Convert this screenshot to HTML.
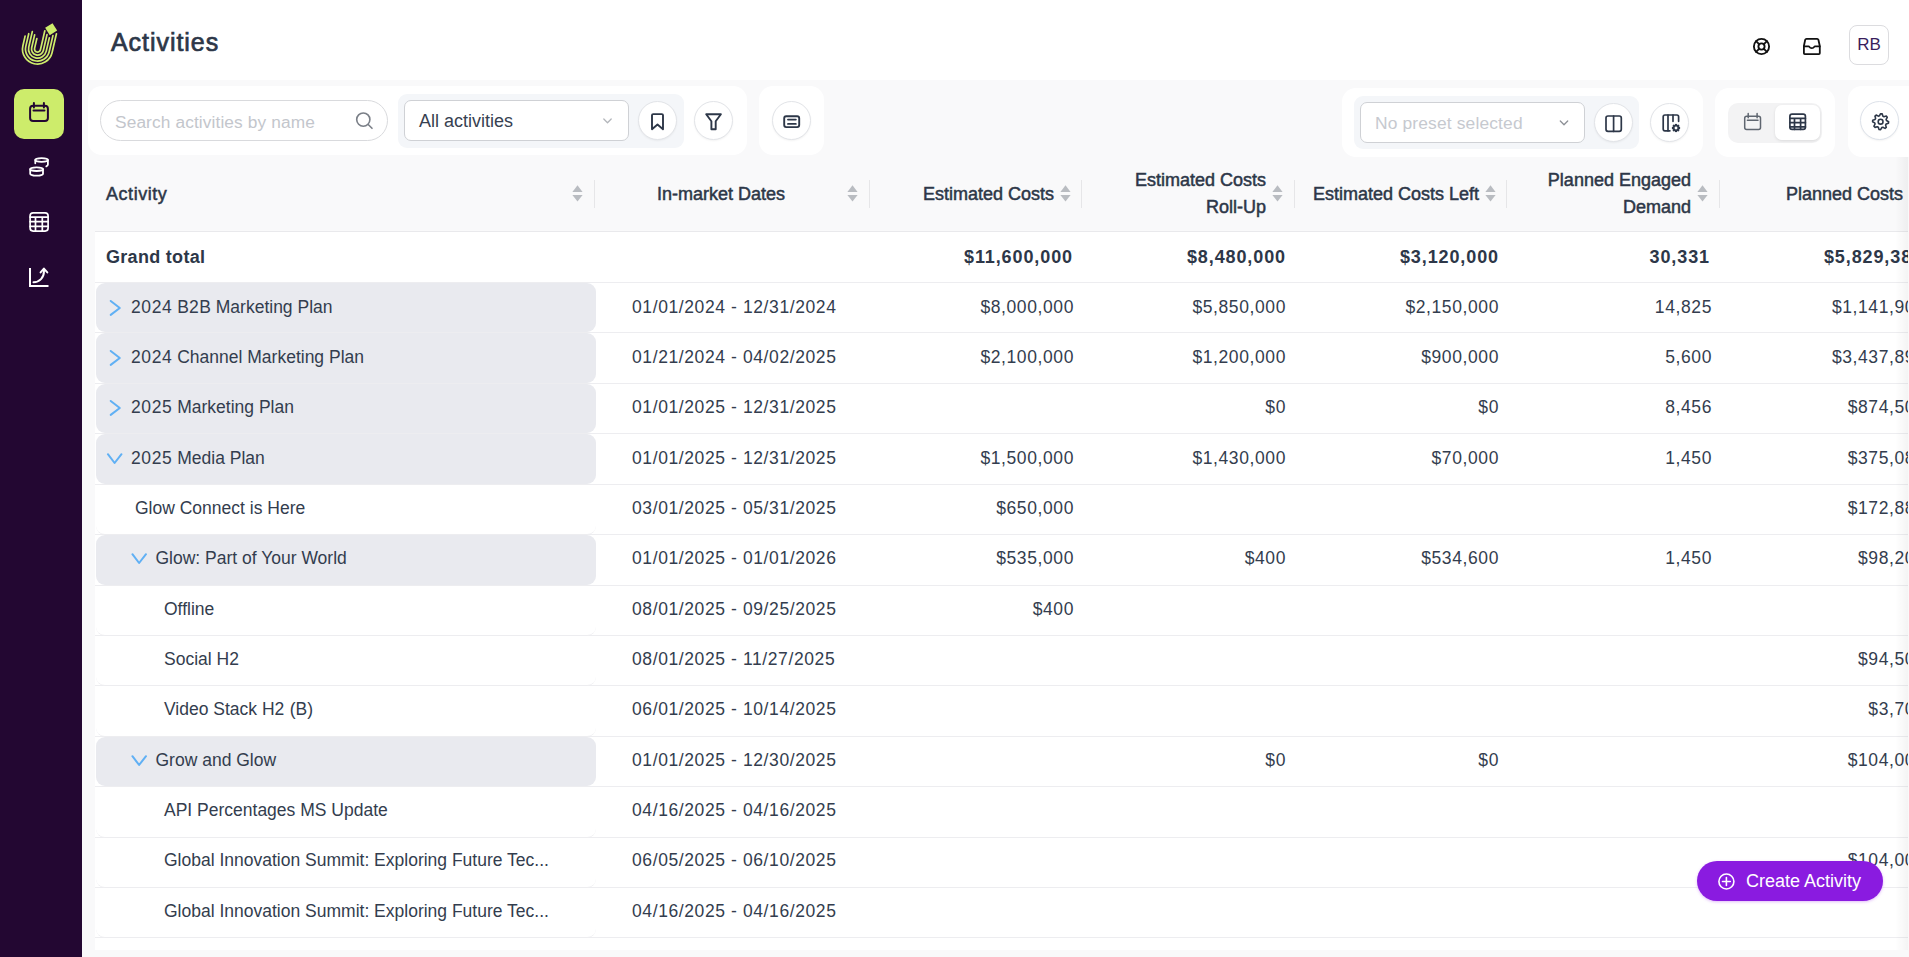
<!DOCTYPE html>
<html><head><meta charset="utf-8"><style>
*{box-sizing:border-box;margin:0;padding:0}
html,body{width:1909px;height:957px;overflow:hidden}
body{font-family:"Liberation Sans",sans-serif;background:#f9f9fa;color:#2d3748;position:relative}
.abs{position:absolute}
svg{display:block;overflow:visible}
#side{left:0;top:0;width:82px;height:957px;background:#230732}
#hdr{left:82px;top:0;width:1827px;height:80px;background:#fff}
.card{position:absolute;background:#fff;border-radius:14px}
.grp{position:absolute;background:#f4f6f9;border-radius:9px}
.cbtn{position:absolute;width:39px;height:39px;border-radius:50%;background:#fff;border:1px solid #e2e4e8;box-shadow:0 1px 2px rgba(0,0,0,.05)}
.sel{position:absolute;background:#fff;border:1px solid #cfd1d5;border-radius:7px}
#tbl{left:95px;top:157px;width:1813px;height:793px;background:#fff;overflow:hidden}
#thead{position:absolute;left:0;top:0;width:1813px;height:75px;background:#f9f9fa;border-bottom:1px solid #e9e9ec}
.th{position:absolute;font-weight:400;font-size:18px;line-height:27px;-webkit-text-stroke:0.5px #2d3748;white-space:nowrap;color:#2d3748}
.dv{position:absolute;top:23px;width:1px;height:28px;background:#e6e6e8}
.row{position:absolute;left:0;width:1813px;border-bottom:1px solid #ededf0}
.pill{position:absolute;left:1px;top:0;width:500px;bottom:0;background:#e9eaef;border-radius:9px}
.cell{position:absolute;top:0;height:100%;display:flex;align-items:center;font-size:17.5px;white-space:nowrap;color:#2d3748}
.r{justify-content:flex-end}
.lpill{position:absolute;left:1px;top:0;width:500px;bottom:-1px;background:#fff;border-bottom:1px solid #ededf0;border-radius:9px}
.tx{position:absolute;font-size:17.5px;line-height:20px;white-space:nowrap;color:#333d4e}
.num{letter-spacing:0.6px}
.dg{letter-spacing:0.6px}
.gt{font-weight:700;font-size:18px;letter-spacing:0.9px}
</style></head><body>
<div id="side" class="abs"></div>
<svg class="abs" style="left:0px;top:0px" width="82" height="80" viewBox="0 0 82 80" fill="none" stroke="#cdec6b" stroke-width="1.7" stroke-linecap="round" stroke-linejoin="round" ><g transform="translate(37.5 49.1) rotate(13)"><path d="M-3 -10.1 V0 A3 3 0 0 0 3 0 V-19.5"/><path d="M-6 -13.2 V0 A6 6 0 0 0 6 0 V-16.3"/><path d="M-9 -15.9 V0 A9 9 0 0 0 9 0 V-13.6"/><path d="M-12 -13.0 V0 A12 12 0 0 0 12 0 V-16.6"/><path d="M-15 -9.8 V0 A15 15 0 0 0 15 0 V-19.2"/><rect x="-4.35" y="-4.35" width="8.7" height="8.7" fill="#cdec6b" stroke="none" transform="translate(8.8 -22.5) rotate(-45)"/></g></svg>
<div class="abs" style="left:14px;top:89px;width:50px;height:50px;border-radius:10px;background:#cdec6b"></div>
<svg class="abs" style="left:0px;top:90px" width="82" height="50" viewBox="0 90 82 50" fill="none" stroke="#230732" stroke-width="2" stroke-linecap="round" stroke-linejoin="round" ><rect x="30.1" y="105.7" width="17.8" height="15.2" rx="3"/><path d="M33.9 103v4.6M43.9 103v4.6M33.5 110.6h11"/></svg>
<svg class="abs" style="left:0px;top:150px" width="82" height="35" viewBox="0 150 82 35" fill="none" stroke="#fff" stroke-width="1.8" stroke-linecap="round" stroke-linejoin="round" ><ellipse cx="41.6" cy="160" rx="6.3" ry="1.8"/><path d="M35.3 160v3.3M47.9 160v4.6c0 .8-.6 1.4-1.6 1.8"/><ellipse cx="36.6" cy="169.2" rx="6.4" ry="1.8"/><path d="M30.2 169.2v4.6c0 1 2.9 1.9 6.4 1.9s6.4-.9 6.4-1.9v-4.6"/></svg>
<svg class="abs" style="left:0px;top:205px" width="82" height="35" viewBox="0 205 82 35" fill="none" stroke="#fff" stroke-width="1.7" stroke-linecap="round" stroke-linejoin="round" ><rect x="30.1" y="212.8" width="18" height="18.3" rx="3"/><path d="M30.1 217.1h18M30.1 221.7h18M30.1 226.4h18M35.5 217.1v14M42.3 217.1v14"/></svg>
<svg class="abs" style="left:0px;top:260px" width="82" height="35" viewBox="0 260 82 35" fill="none" stroke="#fff" stroke-width="2" stroke-linecap="round" stroke-linejoin="round" ><path d="M30 268v18h18.5" stroke-linecap="butt" stroke-linejoin="miter"/><path d="M33.5 282.2c6 0 10.5-4.5 10.5-11.2"/><path d="M40.6 272.4l3.3-3.8 3.4 3.8"/></svg>
<div id="hdr" class="abs"></div>
<div class="abs" style="left:111px;top:26px;font-size:25px;font-weight:400;line-height:32px;color:#2d3748;-webkit-text-stroke:0.7px #2d3748;letter-spacing:0.95px">Activities</div>
<svg class="abs" style="left:1745px;top:30px" width="35" height="35" viewBox="1745 30 35 35" fill="none" stroke="#111" stroke-width="1.85" stroke-linecap="round" stroke-linejoin="round" ><circle cx="1761.5" cy="46.5" r="7.6"/><circle cx="1761.5" cy="46.5" r="3.1"/><path d="M1763.7 44.3l3.2-3.2M1759.3 48.7l-3.2 3.2M1759.3 44.3l-3.2-3.2M1763.7 48.7l3.2 3.2"/></svg>
<svg class="abs" style="left:1795px;top:30px" width="35" height="35" viewBox="1795 30 35 35" fill="none" stroke="#111" stroke-width="1.8" stroke-linecap="round" stroke-linejoin="round" ><path d="M1803.9 46v7.2c0 .6.3.9.9.9h14.1c.6 0 .9-.3.9-.9V46l-1.4-6.2c-.2-.7-.6-1-1.3-1h-10.6c-.7 0-1.1.3-1.3 1z"/><path d="M1803.9 46.4h4.7c.4 0 .6.2.8.5.5.9 1.2 1.3 2.4 1.3s1.9-.4 2.4-1.3c.2-.3.4-.5.8-.5h4.7"/></svg>
<div class="abs" style="left:1849px;top:25px;width:40px;height:40px;border:1px solid #dcdcdf;border-radius:8px;background:#fff;font-size:17px;line-height:38px;text-align:center;color:#3a1e5c">RB</div>
<div class="card" style="left:88px;top:86px;width:659px;height:69px"></div>
<div class="abs" style="left:100px;top:100px;width:288px;height:41px;border:1px solid #d9dadd;border-radius:21px;background:#fff"></div>
<div class="abs" style="left:115px;top:110.5px;font-size:17.3px;line-height:22px;letter-spacing:0.12px;color:#c3c6cc">Search activities by name</div>
<svg class="abs" style="left:350px;top:105px" width="30" height="30" viewBox="350 105 30 30" fill="none" stroke="#7a7f87" stroke-width="1.6" stroke-linecap="round" stroke-linejoin="round" ><circle cx="363.3" cy="119.6" r="6.6"/><path d="M368.2 124.5l3.8 3.8"/></svg>
<div class="grp" style="left:398px;top:94px;width:286px;height:54px"></div>
<div class="sel" style="left:404px;top:100px;width:225px;height:41px"></div>
<div class="abs" style="left:419px;top:110px;font-size:18px;line-height:22px;color:#374151">All activities</div>
<svg class="abs" style="left:595px;top:110px" width="25" height="20" viewBox="595 110 25 20" fill="none" stroke="#b3b6bb" stroke-width="1.3" stroke-linecap="round" stroke-linejoin="round" ><path d="M603.8 119l3.7 3.7 3.7-3.7"/></svg>
<div class="cbtn" style="left:638px;top:101px"></div>
<svg class="abs" style="left:640px;top:105px" width="35" height="30" viewBox="640 105 35 30" fill="none" stroke="#2d3748" stroke-width="1.9" stroke-linecap="round" stroke-linejoin="round" ><path d="M652 129.2V115.3c0-.8.5-1.2 1.2-1.2h8.6c.7 0 1.2.4 1.2 1.2v13.9l-5.5-4.6z"/></svg>
<div class="cbtn" style="left:694px;top:101px"></div>
<svg class="abs" style="left:695px;top:105px" width="35" height="30" viewBox="695 105 35 30" fill="none" stroke="#2d3748" stroke-width="1.9" stroke-linecap="round" stroke-linejoin="round" ><path d="M706.2 114.2h14.7l-5.2 7v8.1h-4.3v-8.1z"/></svg>
<div class="card" style="left:759px;top:86px;width:65px;height:69px"></div>
<div class="cbtn" style="left:772px;top:101px"></div>
<svg class="abs" style="left:775px;top:105px" width="35" height="30" viewBox="775 105 35 30" fill="none" stroke="#2d3748" stroke-width="1.9" stroke-linecap="round" stroke-linejoin="round" ><rect x="784.2" y="116.3" width="15" height="10.8" rx="2"/><path d="M788 119.6h7.8M788 123.9h7.8"/></svg>
<div class="card" style="left:1342px;top:88px;width:361px;height:69px"></div>
<div class="grp" style="left:1354px;top:96px;width:285px;height:53px"></div>
<div class="sel" style="left:1360px;top:102px;width:225px;height:41px"></div>
<div class="abs" style="left:1375px;top:112px;font-size:17.4px;line-height:22px;letter-spacing:0.15px;color:#c6c9cf">No preset selected</div>
<svg class="abs" style="left:1550px;top:110px" width="25" height="20" viewBox="1550 110 25 20" fill="none" stroke="#8d9096" stroke-width="1.3" stroke-linecap="round" stroke-linejoin="round" ><path d="M1560.3 121l3.7 3.7 3.7-3.7"/></svg>
<div class="cbtn" style="left:1594px;top:103px"></div>
<svg class="abs" style="left:1600px;top:110px" width="30" height="30" viewBox="1600 110 30 30" fill="none" stroke="#2d3748" stroke-width="1.7" stroke-linecap="round" stroke-linejoin="round" ><rect x="1606" y="116" width="15.3" height="15.3" rx="2"/><path d="M1613.6 116v15.3"/></svg>
<div class="cbtn" style="left:1650px;top:103px"></div>
<svg class="abs" style="left:1655px;top:108px" width="35" height="30" viewBox="1655 108 35 30" fill="none" stroke="#2d3748" stroke-width="1.7" stroke-linecap="round" stroke-linejoin="round" ><path d="M1678.6 121.3v-4.6c0-1.1-.6-1.7-1.7-1.7h-12c-1.1 0-1.7.6-1.7 1.7v12.4c0 1.1.6 1.7 1.7 1.7h5"/><path d="M1668 115v15.8M1673 115v6.3"/><circle cx="1676" cy="128" r="2.3" stroke-width="1.7"/><path d="M1678.60 128.00L1680.10 128.00" stroke-width="2.2" stroke-linecap="butt"/><path d="M1677.84 129.84L1678.90 130.90" stroke-width="2.2" stroke-linecap="butt"/><path d="M1676.00 130.60L1676.00 132.10" stroke-width="2.2" stroke-linecap="butt"/><path d="M1674.16 129.84L1673.10 130.90" stroke-width="2.2" stroke-linecap="butt"/><path d="M1673.40 128.00L1671.90 128.00" stroke-width="2.2" stroke-linecap="butt"/><path d="M1674.16 126.16L1673.10 125.10" stroke-width="2.2" stroke-linecap="butt"/><path d="M1676.00 125.40L1676.00 123.90" stroke-width="2.2" stroke-linecap="butt"/><path d="M1677.84 126.16L1678.90 125.10" stroke-width="2.2" stroke-linecap="butt"/></svg>
<div class="card" style="left:1715px;top:88px;width:120px;height:69px"></div>
<div class="abs" style="left:1728px;top:103px;width:94px;height:40px;border-radius:10px;background:#f3f3f4"></div>
<div class="abs" style="left:1775px;top:105px;width:45px;height:35px;border-radius:7px;background:#fff;box-shadow:0 1px 3px rgba(0,0,0,.10)"></div>
<svg class="abs" style="left:1735px;top:105px" width="35" height="30" viewBox="1735 105 35 30" fill="none" stroke="#5f6670" stroke-width="1.5" stroke-linecap="round" stroke-linejoin="round" ><rect x="1744.7" y="116.3" width="15.8" height="13.1" rx="2"/><path d="M1748.2 113.6v4.2M1757.1 113.6v4.2M1747.4 120.3h10.6"/></svg>
<svg class="abs" style="left:1780px;top:105px" width="35" height="30" viewBox="1780 105 35 30" fill="none" stroke="#2d3748" stroke-width="1.7" stroke-linecap="round" stroke-linejoin="round" ><rect x="1789.9" y="114.1" width="15.5" height="15.3" rx="2.2"/><path d="M1789.9 118.3h15.5M1789.9 122.7h15.5M1789.9 126.9h15.5M1794.5 118.3v11M1800.6 118.3v11"/></svg>
<div class="card" style="left:1848px;top:86px;width:80px;height:71px"></div>
<div class="cbtn" style="left:1860px;top:101px;border-color:#dde2ea"></div>
<svg class="abs" style="left:1865px;top:105px" width="32" height="32" viewBox="1865 105 32 32" fill="none" stroke="#2d3748" stroke-width="1.6" stroke-linecap="round" stroke-linejoin="round" ><path d="M1880.60 113.70 L1882.16 113.85 L1882.90 116.16 L1883.93 116.71 L1886.26 116.04 L1887.25 117.26 L1886.14 119.40 L1886.48 120.53 L1888.60 121.70 L1888.45 123.26 L1886.14 124.00 L1885.59 125.03 L1886.26 127.36 L1885.04 128.35 L1882.90 127.24 L1881.77 127.58 L1880.60 129.70 L1879.04 129.55 L1878.30 127.24 L1877.27 126.69 L1874.94 127.36 L1873.95 126.14 L1875.06 124.00 L1874.72 122.87 L1872.60 121.70 L1872.75 120.14 L1875.06 119.40 L1875.61 118.37 L1874.94 116.04 L1876.16 115.05 L1878.30 116.16 L1879.43 115.82Z"/><circle cx="1880.6" cy="121.7" r="2.4"/></svg>
<div id="tbl" class="abs">
<div id="thead">
<div class="th" style="left:11px;top:24px"><span style="letter-spacing:0.55px">Activity</span></div>
<svg class="abs" style="left:477px;top:28px" width="11" height="17" viewBox="0 0 11 17"><path d="M5.5 0.3L10.6 7H0.4Z" fill="#b9bcc1"/><path d="M5.5 16.6L10.6 10H0.4Z" fill="#b9bcc1"/></svg>
<div class="dv" style="left:499px"></div>
<div class="th" style="left:562px;top:24px">In-market Dates</div>
<svg class="abs" style="left:752px;top:28px" width="11" height="17" viewBox="0 0 11 17"><path d="M5.5 0.3L10.6 7H0.4Z" fill="#b9bcc1"/><path d="M5.5 16.6L10.6 10H0.4Z" fill="#b9bcc1"/></svg>
<div class="dv" style="left:774px"></div>
<div class="th" style="right:854px;top:24px;text-align:right">Estimated Costs</div>
<svg class="abs" style="left:965px;top:28px" width="11" height="17" viewBox="0 0 11 17"><path d="M5.5 0.3L10.6 7H0.4Z" fill="#b9bcc1"/><path d="M5.5 16.6L10.6 10H0.4Z" fill="#b9bcc1"/></svg>
<div class="dv" style="left:986px"></div>
<div class="th" style="right:642px;top:10px;text-align:right">Estimated Costs<br>Roll-Up</div>
<svg class="abs" style="left:1177px;top:28px" width="11" height="17" viewBox="0 0 11 17"><path d="M5.5 0.3L10.6 7H0.4Z" fill="#b9bcc1"/><path d="M5.5 16.6L10.6 10H0.4Z" fill="#b9bcc1"/></svg>
<div class="dv" style="left:1199px"></div>
<div class="th" style="right:429px;top:24px;text-align:right">Estimated Costs Left</div>
<svg class="abs" style="left:1390px;top:28px" width="11" height="17" viewBox="0 0 11 17"><path d="M5.5 0.3L10.6 7H0.4Z" fill="#b9bcc1"/><path d="M5.5 16.6L10.6 10H0.4Z" fill="#b9bcc1"/></svg>
<div class="dv" style="left:1411px"></div>
<div class="th" style="right:217px;top:10px;text-align:right">Planned Engaged<br>Demand</div>
<svg class="abs" style="left:1602px;top:28px" width="11" height="17" viewBox="0 0 11 17"><path d="M5.5 0.3L10.6 7H0.4Z" fill="#b9bcc1"/><path d="M5.5 16.6L10.6 10H0.4Z" fill="#b9bcc1"/></svg>
<div class="dv" style="left:1624px"></div>
<div class="th" style="right:5px;top:24px;text-align:right">Planned Costs</div>
<svg class="abs" style="left:1814px;top:28px" width="11" height="17" viewBox="0 0 11 17"><path d="M5.5 0.3L10.6 7H0.4Z" fill="#b9bcc1"/><path d="M5.5 16.6L10.6 10H0.4Z" fill="#b9bcc1"/></svg>
</div>
<div class="row" style="top:75px;height:51px">
<div class="cell" style="left:11px;font-weight:700;font-size:18px;letter-spacing:0.3px">Grand total</div>
<div class="cell r gt" style="left:0;width:978px">$11,600,000</div>
<div class="cell r gt" style="left:0;width:1191px">$8,480,000</div>
<div class="cell r gt" style="left:0;width:1404px">$3,120,000</div>
<div class="cell r gt" style="left:0;width:1615px">30,331</div>
<div class="cell r gt" style="left:0;width:1828px">$5,829,380</div>
</div>
<div class="row" style="top:126.000px;height:50.420px">
<div class="pill"></div>
</div>
<div class="row" style="top:176.420px;height:50.420px">
<div class="pill"></div>
</div>
<div class="row" style="top:226.840px;height:50.420px">
<div class="pill"></div>
</div>
<div class="row" style="top:277.260px;height:50.420px">
<div class="pill"></div>
</div>
<div class="row" style="top:327.680px;height:50.420px">
<div class="lpill"></div>
</div>
<div class="row" style="top:378.100px;height:50.420px">
<div class="pill"></div>
</div>
<div class="row" style="top:428.520px;height:50.420px">
<div class="lpill"></div>
</div>
<div class="row" style="top:478.940px;height:50.420px">
<div class="lpill"></div>
</div>
<div class="row" style="top:529.360px;height:50.420px">
<div class="lpill"></div>
</div>
<div class="row" style="top:579.780px;height:50.420px">
<div class="pill"></div>
</div>
<div class="row" style="top:630.200px;height:50.420px">
<div class="lpill"></div>
</div>
<div class="row" style="top:680.620px;height:50.420px">
<div class="lpill"></div>
</div>
<div class="row" style="top:731.040px;height:50.420px">
<div class="lpill"></div>
</div>
<svg class="abs" style="left:0;top:129.55px" width="40" height="40" viewBox="95 286.55 40 40" fill="none" stroke="#60b0f4" stroke-width="2" stroke-linecap="round" stroke-linejoin="round"><path d="M110.7 300.50L119.8 307.50L110.7 314.40"/></svg>
<div class="tx " style="left:36px;top:140px"><span class="dg">2024</span> B<span class="dg">2</span>B Marketing Plan</div>
<div class="tx num" style="left:537px;top:140px">01/01/2024 - 12/31/2024</div>
<div class="tx num" style="right:834px;top:140px;text-align:right">$8,000,000</div>
<div class="tx num" style="right:622px;top:140px;text-align:right">$5,850,000</div>
<div class="tx num" style="right:409px;top:140px;text-align:right">$2,150,000</div>
<div class="tx num" style="right:196px;top:140px;text-align:right">14,825</div>
<div class="tx num" style="right:-17.5px;top:140px;text-align:right">$1,141,900</div>
<svg class="abs" style="left:0;top:179.88px" width="40" height="40" viewBox="95 336.88 40 40" fill="none" stroke="#60b0f4" stroke-width="2" stroke-linecap="round" stroke-linejoin="round"><path d="M110.7 350.83L119.8 357.83L110.7 364.73"/></svg>
<div class="tx " style="left:36px;top:190px"><span class="dg">2024</span> Channel Marketing Plan</div>
<div class="tx num" style="left:537px;top:190px">01/21/2024 - 04/02/2025</div>
<div class="tx num" style="right:834px;top:190px;text-align:right">$2,100,000</div>
<div class="tx num" style="right:622px;top:190px;text-align:right">$1,200,000</div>
<div class="tx num" style="right:409px;top:190px;text-align:right">$900,000</div>
<div class="tx num" style="right:196px;top:190px;text-align:right">5,600</div>
<div class="tx num" style="right:-17.5px;top:190px;text-align:right">$3,437,890</div>
<svg class="abs" style="left:0;top:230.21px" width="40" height="40" viewBox="95 387.21 40 40" fill="none" stroke="#60b0f4" stroke-width="2" stroke-linecap="round" stroke-linejoin="round"><path d="M110.7 401.16L119.8 408.16L110.7 415.06"/></svg>
<div class="tx " style="left:36px;top:240px"><span class="dg">2025</span> Marketing Plan</div>
<div class="tx num" style="left:537px;top:240px">01/01/2025 - 12/31/2025</div>
<div class="tx num" style="right:622px;top:240px;text-align:right">$0</div>
<div class="tx num" style="right:409px;top:240px;text-align:right">$0</div>
<div class="tx num" style="right:196px;top:240px;text-align:right">8,456</div>
<div class="tx num" style="right:-17.5px;top:240px;text-align:right">$874,500</div>
<svg class="abs" style="left:0;top:280.54px" width="70" height="40" viewBox="95 437.54 70 40" fill="none" stroke="#60b0f4" stroke-width="2" stroke-linecap="round" stroke-linejoin="round"><path d="M107.9 453.74L114.6 462.54L121.5 453.74"/></svg>
<div class="tx " style="left:36px;top:291px"><span class="dg">2025</span> Media Plan</div>
<div class="tx num" style="left:537px;top:291px">01/01/2025 - 12/31/2025</div>
<div class="tx num" style="right:834px;top:291px;text-align:right">$1,500,000</div>
<div class="tx num" style="right:622px;top:291px;text-align:right">$1,430,000</div>
<div class="tx num" style="right:409px;top:291px;text-align:right">$70,000</div>
<div class="tx num" style="right:196px;top:291px;text-align:right">1,450</div>
<div class="tx num" style="right:-17.5px;top:291px;text-align:right">$375,080</div>
<div class="tx " style="left:40px;top:341px">Glow Connect is Here</div>
<div class="tx num" style="left:537px;top:341px">03/01/2025 - 05/31/2025</div>
<div class="tx num" style="right:834px;top:341px;text-align:right">$650,000</div>
<div class="tx num" style="right:-17.5px;top:341px;text-align:right">$172,880</div>
<svg class="abs" style="left:0;top:381.20px" width="70" height="40" viewBox="95 538.20 70 40" fill="none" stroke="#60b0f4" stroke-width="2" stroke-linecap="round" stroke-linejoin="round"><path d="M132.4 554.40L139.1 563.20L146.0 554.40"/></svg>
<div class="tx " style="left:60.5px;top:391px">Glow: Part of Your World</div>
<div class="tx num" style="left:537px;top:391px">01/01/2025 - 01/01/2026</div>
<div class="tx num" style="right:834px;top:391px;text-align:right">$535,000</div>
<div class="tx num" style="right:622px;top:391px;text-align:right">$400</div>
<div class="tx num" style="right:409px;top:391px;text-align:right">$534,600</div>
<div class="tx num" style="right:196px;top:391px;text-align:right">1,450</div>
<div class="tx num" style="right:-17.5px;top:391px;text-align:right">$98,200</div>
<div class="tx " style="left:69px;top:442px">Offline</div>
<div class="tx num" style="left:537px;top:442px">08/01/2025 - 09/25/2025</div>
<div class="tx num" style="right:834px;top:442px;text-align:right">$400</div>
<div class="tx " style="left:69px;top:492px">Social H<span class="dg">2</span></div>
<div class="tx num" style="left:537px;top:492px">08/01/2025 - 11/27/2025</div>
<div class="tx num" style="right:-17.5px;top:492px;text-align:right">$94,500</div>
<div class="tx " style="left:69px;top:542px">Video Stack H<span class="dg">2</span> (B)</div>
<div class="tx num" style="left:537px;top:542px">06/01/2025 - 10/14/2025</div>
<div class="tx num" style="right:-17.5px;top:542px;text-align:right">$3,700</div>
<svg class="abs" style="left:0;top:582.52px" width="70" height="40" viewBox="95 739.52 70 40" fill="none" stroke="#60b0f4" stroke-width="2" stroke-linecap="round" stroke-linejoin="round"><path d="M132.4 755.72L139.1 764.52L146.0 755.72"/></svg>
<div class="tx " style="left:60.5px;top:593px">Grow and Glow</div>
<div class="tx num" style="left:537px;top:593px">01/01/2025 - 12/30/2025</div>
<div class="tx num" style="right:622px;top:593px;text-align:right">$0</div>
<div class="tx num" style="right:409px;top:593px;text-align:right">$0</div>
<div class="tx num" style="right:-17.5px;top:593px;text-align:right">$104,000</div>
<div class="tx " style="left:69px;top:643px">API Percentages MS Update</div>
<div class="tx num" style="left:537px;top:643px">04/16/2025 - 04/16/2025</div>
<div class="tx " style="left:69px;top:693px">Global Innovation Summit: Exploring Future Tec...</div>
<div class="tx num" style="left:537px;top:693px">06/05/2025 - 06/10/2025</div>
<div class="tx num" style="right:-17.5px;top:693px;text-align:right">$104,000</div>
<div class="tx " style="left:69px;top:744px">Global Innovation Summit: Exploring Future Tec...</div>
<div class="tx num" style="left:537px;top:744px">04/16/2025 - 04/16/2025</div>
<div class="abs" style="right:0;top:0;width:13px;height:793px;background:linear-gradient(to right,rgba(0,0,0,0),rgba(0,0,0,.045))"></div>
</div>
<div class="abs" style="left:1697px;top:861px;width:186px;height:40px;border-radius:20px;background:#8a1be0;box-shadow:0 1px 3px rgba(170,60,240,.35)"></div>
<svg class="abs" style="left:1710px;top:865px" width="35" height="35" viewBox="1710 865 35 35" fill="none" stroke="#fff" stroke-width="1.6" stroke-linecap="round" stroke-linejoin="round" ><circle cx="1726.4" cy="881.5" r="7.5"/><path d="M1726.4 877.6v7.8M1722.5 881.5h7.8"/></svg>
<div class="abs" style="left:1746px;top:870px;font-size:18px;line-height:22px;color:#fff">Create Activity</div>
</body></html>
